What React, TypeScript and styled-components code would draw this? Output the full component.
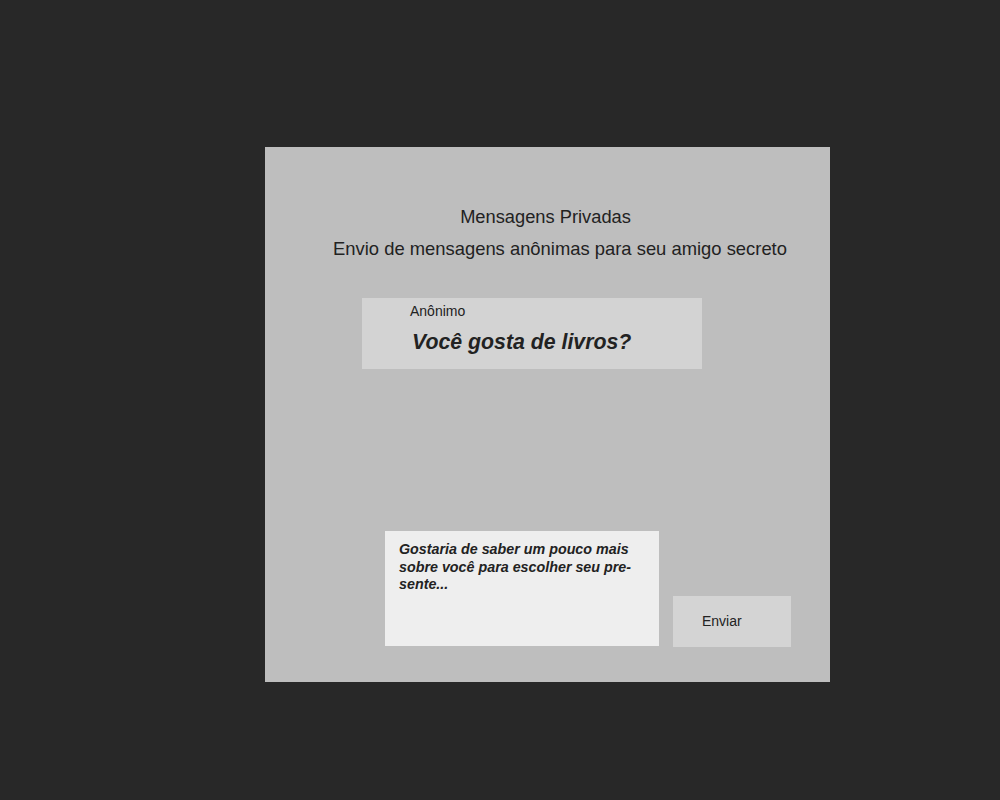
import styled, { createGlobalStyle } from "styled-components";

const GlobalStyle = createGlobalStyle`
  html, body {
    margin: 0;
    padding: 0;
    background-color: #282828;
    font-family: "Liberation Sans", Arial, sans-serif;
  }
`;

const Page = styled.div`
  width: 1000px;
  height: 800px;
  padding: 147px 0 0 265px;
  box-sizing: border-box;
`;

const Panel = styled.div`
  width: 565px;
  height: 535px;
  box-sizing: border-box;
  background-color: #bebebe;
  color: #222;
  display: flex;
  flex-direction: column;
  padding: 59px 0 36px;
`;

const Header = styled.header`
  display: flex;
  flex-direction: column;
  align-items: center;
  gap: 11px;
`;

const Title = styled.h1`
  margin: 0 4px 0 0;
  font-size: 18.3px;
  font-weight: normal;
  line-height: 21px;
`;

const Subtitle = styled.p`
  margin: 0;
  padding-left: 25px;
  font-size: 18.4px;
  line-height: 21px;
`;

const MessageCard = styled.div`
  margin: 39px 0 0 97px;
  width: 340px;
  height: 71px;
  box-sizing: border-box;
  background-color: #d3d3d3;
  padding: 5px 0 0 48px;
  display: flex;
  flex-direction: column;
  gap: 11px;
`;

const Author = styled.span`
  font-size: 14px;
  line-height: 16px;
`;

const Question = styled.p`
  margin: 0 0 0 2px;
  font-size: 21.3px;
  line-height: 24px;
  font-weight: bold;
  font-style: italic;
`;

const Composer = styled.div`
  margin-top: auto;
  padding-left: 120px;
  display: flex;
  align-items: flex-end;
  gap: 14px;
`;

const Draft = styled.div`
  width: 274px;
  height: 115px;
  box-sizing: border-box;
  background-color: #eeeeee;
  padding: 10px 14px;
  font-size: 14.3px;
  line-height: 17.5px;
  font-weight: bold;
  font-style: italic;
`;

const SendButton = styled.button`
  width: 118px;
  height: 51px;
  margin-bottom: -1px;
  border: none;
  background-color: #d4d4d4;
  color: #222;
  font-family: "Liberation Sans", Arial, sans-serif;
  font-size: 14px;
  text-align: left;
  padding: 0 0 1px 29px;
  cursor: pointer;
`;

export default function App() {
  return (
    <>
      <GlobalStyle />
      <Page>
        <Panel>
          <Header>
            <Title>Mensagens Privadas</Title>
            <Subtitle>Envio de mensagens anônimas para seu amigo secreto</Subtitle>
          </Header>
          <MessageCard>
            <Author>Anônimo</Author>
            <Question>Você gosta de livros?</Question>
          </MessageCard>
          <Composer>
            <Draft>
              Gostaria de saber um pouco mais sobre você para escolher seu pre{"\u00AD"}sente...
            </Draft>
            <SendButton>Enviar</SendButton>
          </Composer>
        </Panel>
      </Page>
    </>
  );
}
